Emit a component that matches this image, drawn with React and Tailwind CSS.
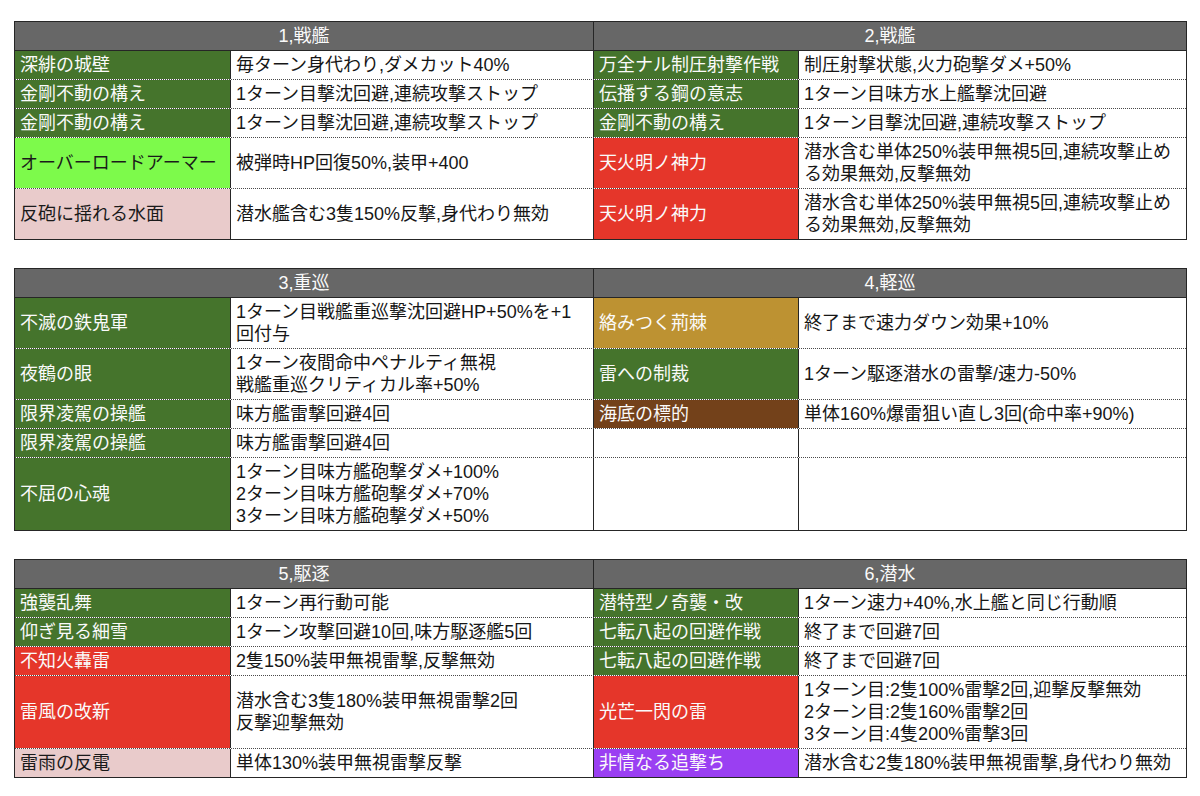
import React from "react";

// colour classes for the label cells
const C = {
  g: "bg-[#45742c] text-[#fafafa]",
  lg: "bg-[#7dfa4b] text-[#1a1a1a]",
  pk: "bg-[#e9cbcb] text-[#1a1a1a]",
  r: "bg-[#e5362a] text-[#fafafa]",
  y: "bg-[#bd9232] text-[#fafafa]",
  br: "bg-[#73411a] text-[#fafafa]",
  p: "bg-[#9a3ff2] text-[#fafafa]",
  e: "bg-white",
};

const sections = [
  {
    left: "1,戦艦",
    right: "2,戦艦",
    rows: [
      ["深緋の城壁", "g", ["毎ターン身代わり,ダメカット40%"], "万全ナル制圧射撃作戦", "g", ["制圧射撃状態,火力砲撃ダメ+50%"]],
      ["金剛不動の構え", "g", ["1ターン目撃沈回避,連続攻撃ストップ"], "伝播する鋼の意志", "g", ["1ターン目味方水上艦撃沈回避"]],
      ["金剛不動の構え", "g", ["1ターン目撃沈回避,連続攻撃ストップ"], "金剛不動の構え", "g", ["1ターン目撃沈回避,連続攻撃ストップ"]],
      ["オーバーロードアーマー", "lg", ["被弾時HP回復50%,装甲+400"], "天火明ノ神力", "r", ["潜水含む単体250%装甲無視5回,連続攻撃止め", "る効果無効,反撃無効"]],
      ["反砲に揺れる水面", "pk", ["潜水艦含む3隻150%反撃,身代わり無効"], "天火明ノ神力", "r", ["潜水含む単体250%装甲無視5回,連続攻撃止め", "る効果無効,反撃無効"]],
    ],
  },
  {
    left: "3,重巡",
    right: "4,軽巡",
    rows: [
      ["不滅の鉄鬼軍", "g", ["1ターン目戦艦重巡撃沈回避HP+50%を+1", "回付与"], "絡みつく荊棘", "y", ["終了まで速力ダウン効果+10%"]],
      ["夜鶴の眼", "g", ["1ターン夜間命中ペナルティ無視", "戦艦重巡クリティカル率+50%"], "雷への制裁", "g", ["1ターン駆逐潜水の雷撃/速力-50%"]],
      ["限界凌駕の操艦", "g", ["味方艦雷撃回避4回"], "海底の標的", "br", ["単体160%爆雷狙い直し3回(命中率+90%)"]],
      ["限界凌駕の操艦", "g", ["味方艦雷撃回避4回"], "", "e", []],
      ["不屈の心魂", "g", ["1ターン目味方艦砲撃ダメ+100%", "2ターン目味方艦砲撃ダメ+70%", "3ターン目味方艦砲撃ダメ+50%"], "", "e", []],
    ],
  },
  {
    left: "5,駆逐",
    right: "6,潜水",
    rows: [
      ["強襲乱舞", "g", ["1ターン再行動可能"], "潜特型ノ奇襲・改", "g", ["1ターン速力+40%,水上艦と同じ行動順"]],
      ["仰ぎ見る細雪", "g", ["1ターン攻撃回避10回,味方駆逐艦5回"], "七転八起の回避作戦", "g", ["終了まで回避7回"]],
      ["不知火轟雷", "r", ["2隻150%装甲無視雷撃,反撃無効"], "七転八起の回避作戦", "g", ["終了まで回避7回"]],
      ["雷風の改新", "r", ["潜水含む3隻180%装甲無視雷撃2回", "反撃迎撃無効"], "光芒一閃の雷", "r", ["1ターン目:2隻100%雷撃2回,迎撃反撃無効", "2ターン目:2隻160%雷撃2回", "3ターン目:4隻200%雷撃3回"]],
      ["雷雨の反電", "pk", ["単体130%装甲無視雷撃反撃"], "非情なる追撃ち", "p", ["潜水含む2隻180%装甲無視雷撃,身代わり無効"]],
    ],
  },
];

function Lines({ lines }) {
  return (
    <div>
      {lines.map((l, i) => (
        <div key={i} className="whitespace-nowrap">
          {l}
        </div>
      ))}
    </div>
  );
}

function Section({ s }) {
  return (
    <div className="ml-[14px] w-[1173px] border border-[#262626]">
      <div className="flex h-[29px] bg-[#676767] text-[#fafafa] border-b border-[#262626]">
        <div className="w-[579px] border-r border-[#262626] flex items-center justify-center">{s.left}</div>
        <div className="flex-1 flex items-center justify-center">{s.right}</div>
      </div>
      {s.rows.map((r, i) => (
        <div
          key={i}
          className={
            "flex " + (i < s.rows.length - 1 ? "border-b border-dotted border-[#4a4a4a]" : "")
          }
        >
          <div className={"w-[216px] min-h-[28px] py-[3px] px-[5px] border-r border-[#262626] flex items-center " + C[r[1]]}>
            {r[0]}
          </div>
          <div className="w-[363px] py-[3px] px-[5px] border-r border-[#262626] flex items-center text-[#161616]">
            <Lines lines={r[2]} />
          </div>
          <div className={"w-[205px] py-[3px] px-[5px] border-r border-[#262626] flex items-center " + C[r[4]]}>
            {r[3]}
          </div>
          <div className="flex-1 py-[3px] px-[5px] flex items-center text-[#161616]">
            <Lines lines={r[5]} />
          </div>
        </div>
      ))}
    </div>
  );
}

export default function App() {
  return (
    <div
      className="min-h-screen bg-white pt-[21px] text-[18px] leading-[22px] flex flex-col gap-[28px]"
      style={{ fontFamily: '"Liberation Sans", "Noto Sans CJK JP", sans-serif' }}
    >
      {sections.map((s, i) => (
        <Section key={i} s={s} />
      ))}
    </div>
  );
}
